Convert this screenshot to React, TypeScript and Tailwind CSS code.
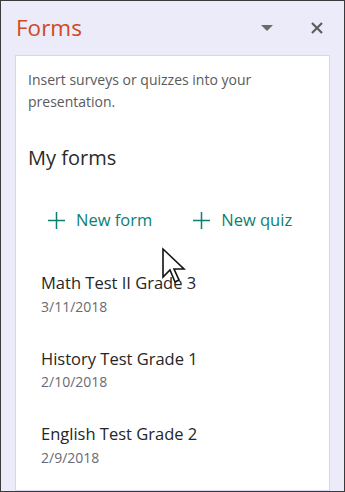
type FormItem = {
  title: string;
  date: string;
};

const forms: FormItem[] = [
  { title: "Math Test II Grade 3", date: "3/11/2018" },
  { title: "History Test Grade 1", date: "2/10/2018" },
  { title: "English Test Grade 2", date: "2/9/2018" },
];

function PlusIcon() {
  return (
    <svg width="17" height="17" viewBox="0 0 17 17">
      <path d="M8.5 0 V17 M0 8.5 H17" stroke="currentColor" strokeWidth="1.5" />
    </svg>
  );
}

function Cursor() {
  return (
    <svg
      className="absolute left-[160px] top-[246px]"
      width="28"
      height="40"
      viewBox="0 0 28 40"
    >
      <path
        d="M2 2 L2 30 L9 23 L14 35 L18 33 L13 22 L23 22 Z"
        fill="#ffffff"
        stroke="#111111"
        strokeWidth="1.6"
        strokeLinejoin="miter"
      />
    </svg>
  );
}

export default function App() {
  return (
    <div
      className="relative flex h-[492px] w-[345px] flex-col overflow-hidden border border-[#3a3a3a] bg-[#ebebfa]"
      style={{ fontFamily: '"Open Sans", "Noto Sans", sans-serif' }}
    >
      <header className="flex h-[54px] items-center justify-between pl-[15px] pr-[21px]">
        <h1 className="text-[22.5px] leading-none text-[#d04a23]">Forms</h1>
        <div className="flex items-center gap-[38px]">
          <svg width="12" height="7" viewBox="0 0 12 7">
            <path d="M0 0 H12 L6 6 Z" fill="#6b6b6b" />
          </svg>
          <svg width="12" height="12" viewBox="0 0 12 12">
            <path
              d="M1 1 L11 11 M11 1 L1 11"
              stroke="#5e5e5e"
              strokeWidth="2.2"
            />
          </svg>
        </div>
      </header>

      <section className="mx-[14px] flex-1 border border-[#d6d6f4] bg-white pl-[12px] pr-[10px]">
        <p className="mt-[13px] text-[14px] leading-[22px] text-[#5a5a5a]">
          Insert surveys or quizzes into your presentation.
        </p>

        <h2 className="mt-[35px] text-[20px] leading-none text-[#2b2b2b]">
          My forms
        </h2>

        <div className="mt-[44px] flex items-center pl-[20px] text-[16.5px] leading-none text-[#0b7f72]">
          <button className="flex items-center gap-[11px]">
            <PlusIcon />
            <span>New form</span>
          </button>
          <button className="ml-[41px] flex items-center gap-[11px]">
            <PlusIcon />
            <span>New quiz</span>
          </button>
        </div>

        <ul className="mt-[46px] flex flex-col gap-[37px] pl-[13px]">
          {forms.map((item) => (
            <li key={item.title} className="flex flex-col gap-[8px]">
              <span className="text-[16.5px] leading-none text-[#262626]">
                {item.title}
              </span>
              <span className="text-[14px] leading-none text-[#6a6a72]">
                {item.date}
              </span>
            </li>
          ))}
        </ul>
      </section>

      <Cursor />
    </div>
  );
}
